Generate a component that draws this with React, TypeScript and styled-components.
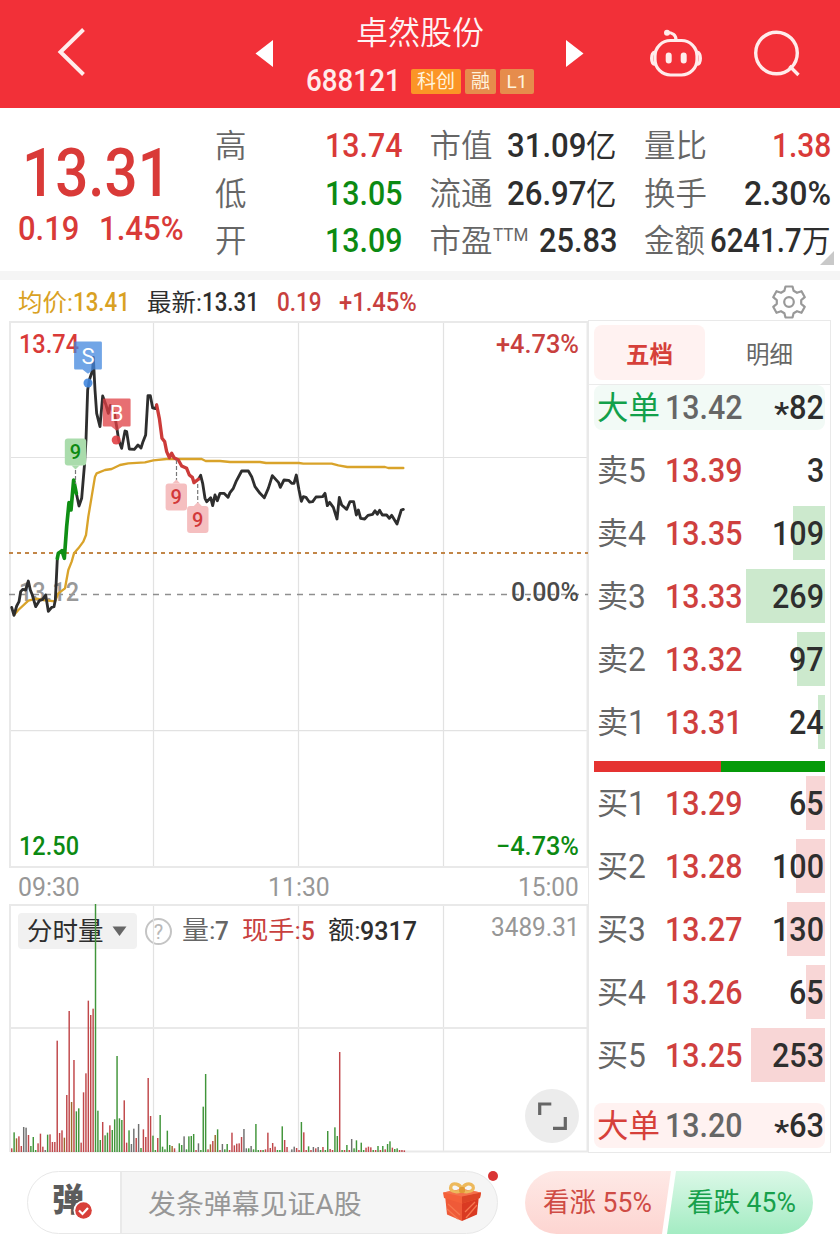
import React, { useLayoutEffect, useRef, useState } from "react";
import styled, { createGlobalStyle } from "styled-components";

const RED = "#d93a38";
const GREEN = "#0c8a12";
const INK = "#2e2e2e";
const GREY = "#666666";
const FONT = `Roboto, "Noto Sans CJK SC", sans-serif`;

const Global = createGlobalStyle`
  * { box-sizing: border-box; }
  body { margin: 0; background: #fff; font-family: ${FONT}; }
  svg { display: block; }
`;

/* ---------- condensed text ---------- */

const FitBox = styled.span<{ $w: number }>`
  display: inline-block;
  flex: none;
  width: ${(p) => p.$w}px;
  white-space: nowrap;
`;
const FitInner = styled.span`
  display: inline-block;
  transform-origin: 0 50%;
`;

/** Condenses its text horizontally until it fills the given width. */
function Fit({ w, children }: { w: number; children: React.ReactNode }) {
  const ref = useRef<HTMLSpanElement>(null);
  const [scale, setScale] = useState(1);
  useLayoutEffect(() => {
    if (ref.current) setScale(w / ref.current.offsetWidth);
  }, [w, children]);
  return (
    <FitBox $w={w}>
      <FitInner ref={ref} style={{ transform: `scaleX(${scale})` }}>
        {children}
      </FitInner>
    </FitBox>
  );
}

/* ---------- page ---------- */

const Page = styled.div`
  width: 840px;
  height: 1250px;
  overflow: hidden;
  background: #fff;
  color: ${INK};
`;

const Header = styled.header`
  display: flex;
  align-items: center;
  height: 108px;
  background: #f23038;
  color: #fff;
`;
const HeaderIcon = styled.svg<{ $ml: number }>`
  flex: none;
  margin-left: ${(p) => p.$ml}px;
`;
const TitleBlock = styled.div`
  display: flex;
  flex-direction: column;
  align-items: center;
  width: 228px;
  height: 108px;
  margin: 0 32px 0 32px;
  padding-top: 10px;
`;
const Title = styled.div`
  font-size: 32px;
  line-height: 46px;
  font-weight: 350;
  opacity: 0.95;
`;
const CodeLine = styled.div`
  display: flex;
  align-items: center;
  gap: 4px;
  height: 50px;
  font-size: 31px;
  font-weight: 500;
  line-height: 50px;
  color: #ffeceb;
`;
const Tag = styled.span<{ $w: number; $bright?: boolean }>`
  width: ${(p) => p.$w}px;
  height: 25px;
  margin-left: ${(p) => (p.$bright ? 6 : 0)}px;
  border-radius: 2px;
  background: ${(p) => (p.$bright ? "#fb9526" : "#e68c4c")};
  font-size: 19px;
  font-weight: 400;
  line-height: 26px;
  text-align: center;
  color: #fff3dc;
`;

const Quote = styled.section`
  display: flex;
  position: relative;
  height: 163px;
  padding-top: 14px;
`;
const Last = styled.div`
  width: 215px;
  padding-left: 18px;
  color: ${RED};
`;
const BigPrice = styled.div`
  height: 84px;
  padding: 9px 0 0 4px;
  font-size: 67px;
  line-height: 84px;
  font-weight: 500;
`;
const Change = styled.div`
  display: flex;
  gap: 20px;
  padding-top: 1px;
  font-size: 33px;
  line-height: 44px;
  font-weight: 500;
`;
const StatColumn = styled.div<{ $w: number; $mr: number }>`
  width: ${(p) => p.$w}px;
  margin-right: ${(p) => p.$mr}px;
`;
const Stat = styled.div`
  display: flex;
  justify-content: space-between;
  height: 47.5px;
  line-height: 49px;
  font-size: 31.5px;
`;
const StatLabel = styled.span`
  display: flex;
  font-weight: 350;
  color: ${GREY};
  white-space: nowrap;
`;
const Sup = styled.sup`
  margin-top: -6px;
  font-size: 18.5px;
  font-weight: 400;
  line-height: 49px;
`;
const StatValue = styled.span<{ $c?: string }>`
  display: flex;
  font-size: 33.5px;
  font-weight: 500;
  line-height: 48px;
  color: ${(p) => p.$c || INK};
`;
const Unit = styled.span`
  font-size: 30.5px;
  font-weight: 400;
  line-height: 49px;
`;
const Corner = styled.i`
  position: absolute;
  right: 6px;
  bottom: 6px;
  border-left: 14px solid transparent;
  border-bottom: 14px solid #c9c9c9;
`;
const Strip = styled.div`
  height: 9px;
  background: #f5f5f5;
`;

const InfoBar = styled.div`
  display: flex;
  align-items: center;
  height: 40px;
  padding: 5px 33px 0 18px;
  font-size: 25px;
  line-height: 42px;
  font-weight: 500;
`;
const InfoItem = styled.span<{ $c: string; $ml?: number }>`
  display: flex;
  margin-left: ${(p) => p.$ml || 0}px;
  color: ${(p) => p.$c};
`;
const Cn = styled.span<{ $s?: number }>`
  font-size: ${(p) => p.$s || 24}px;
  font-weight: 400;
`;
const GearIcon = styled.svg`
  margin: -2px 0 0 auto;
`;

const Main = styled.main`
  display: flex;
  height: 834px;
`;
const Charts = styled.div`
  width: 588px;
`;
const TimeRow = styled.div`
  display: flex;
  justify-content: space-between;
  height: 36px;
  padding: 0 9px 0 18px;
  font-size: 26px;
  line-height: 38px;
  color: #979797;
`;
const VolumeStack = styled.div`
  display: grid;
  height: 249px;
  > * {
    grid-area: 1 / 1;
  }
`;
const VolumeHead = styled.div`
  display: flex;
  align-items: center;
  height: 36px;
  margin: 9px 9px 0 18px;
  font-size: 26px;
  line-height: 38px;
  font-weight: 500;
`;
const Picker = styled.span`
  display: flex;
  align-items: center;
  gap: 8px;
  width: 119px;
  height: 36px;
  padding-left: 9px;
  border-radius: 4px;
  background: #f1f1f1;
  font-size: 25.5px;
  font-weight: 400;
  line-height: 40px;
`;
const Help = styled.span`
  width: 27px;
  height: 27px;
  margin: 0 10px 0 8px;
  border: 2px solid #c4c4c4;
  border-radius: 50%;
  font-size: 20px;
  font-weight: 400;
  line-height: 24px;
  text-align: center;
  color: #b8b8b8;
`;
const MaxVolume = styled.span`
  margin: -8px 0 0 auto;
  font-size: 26px;
  font-weight: 400;
  color: #979797;
`;

/* ---------- order book ---------- */

const Book = styled.aside`
  width: 243px;
  height: 833px;
  padding: 0 5px;
  border: 1px solid #e9e9e9;
`;
const Tabs = styled.div`
  display: flex;
  height: 64px;
  margin: 0 -5px;
  padding: 4px 5px;
  border-bottom: 1px solid #ebebeb;
`;
const Tab = styled.div<{ $on?: boolean }>`
  flex: none;
  width: ${(p) => (p.$on ? 111 : 120)}px;
  height: 55px;
  padding-left: ${(p) => (p.$on ? 0 : 9)}px;
  border-radius: 8px;
  background: ${(p) => (p.$on ? "#fff2f1" : "transparent")};
  color: ${(p) => (p.$on ? "#d6403a" : GREY)};
  font-size: 23.5px;
  font-weight: ${(p) => (p.$on ? 700 : 400)};
  line-height: 60px;
  text-align: center;
`;
const BigOrder = styled.div<{ $sell?: boolean }>`
  display: flex;
  align-items: center;
  height: 45px;
  padding: 0 1px 0 3px;
  border-radius: 8px;
  background: ${(p) => (p.$sell ? "#f2faf6" : "#fff2f1")};
  font-size: 33.5px;
  line-height: 46px;
`;
const BigLabel = styled.span<{ $c: string }>`
  width: 68px;
  padding-top: 2px;
  font-size: 31.5px;
  line-height: 46px;
  color: ${(p) => p.$c};
`;
const Star = styled.span`
  padding-top: 5px;
  margin-bottom: -5px;
  font-size: 32px;
`;
const Rows = styled.div<{ $mt: number }>`
  display: flex;
  flex-direction: column;
  gap: 9px;
  margin-top: ${(p) => p.$mt}px;
`;
const Level = styled.div<{ $bar: number; $c: string }>`
  display: flex;
  align-items: center;
  height: 54px;
  padding: 2px 1px 0 3px;
  background: linear-gradient(${(p) => p.$c}, ${(p) => p.$c}) right / ${(p) => p.$bar}px 100% no-repeat;
  font-size: 33.5px;
  line-height: 56px;
`;
const LevelLabel = styled.span`
  display: flex;
  width: 68px;
  color: ${GREY};
`;
const Price = styled.span<{ $c: string }>`
  color: ${(p) => p.$c};
  font-weight: 500;
`;
const Qty = styled.span`
  display: flex;
  margin-left: auto;
  font-weight: 500;
`;
const Balance = styled.div`
  height: 11px;
  margin: 12px 0 4px;
  background: linear-gradient(90deg, #e53331 127px, #059a09 127px);
`;
const BottomGap = styled.div`
  height: 21px;
`;

/* ---------- footer ---------- */

const Footer = styled.footer`
  display: flex;
  position: relative;
  padding: 17px 27px 0;
`;
const Composer = styled.div`
  display: flex;
  position: relative;
  width: 471px;
  height: 63px;
  border: 1px solid #e8e8e8;
  border-radius: 32px;
  background: linear-gradient(90deg, #fff 92px, #e9e9e9 92px, #e9e9e9 94px, #f5f5f5 94px);
`;
const Danmu = styled.div`
  width: 93px;
  padding-left: 24px;
  font-size: 32px;
  font-weight: 900;
  line-height: 56px;
  color: #5c5c5c;
`;
const CheckBadge = styled.svg`
  position: absolute;
  left: 45px;
  top: 28px;
`;
const Placeholder = styled.div`
  width: 294px;
  padding-left: 27px;
  font-size: 27px;
  font-weight: 400;
  line-height: 66px;
  color: #979797;
`;
const GiftIcon = styled.svg`
  margin: 9px 0 0 27px;
`;
const Dot = styled.i`
  position: absolute;
  right: -1px;
  top: -1px;
  width: 10px;
  height: 10px;
  border-radius: 50%;
  background: #d93434;
`;
const Vote = styled.div<{ $up?: boolean }>`
  width: 146px;
  height: 63px;
  margin-left: ${(p) => (p.$up ? 27 : -4)}px;
  padding-left: ${(p) => (p.$up ? 18 : 20)}px;
  border-radius: ${(p) => (p.$up ? "32px 0 0 32px" : "0 32px 32px 0")};
  clip-path: ${(p) =>
    p.$up
      ? "polygon(0 0, 100% 0, 137px 100%, 0 100%)"
      : "polygon(9px 0, 100% 0, 100% 100%, 0 100%)"};
  background: ${(p) =>
    p.$up
      ? "linear-gradient(#fee9e6, #fdd5d1)"
      : "linear-gradient(#dbf8e7, #a4ecc3)"};
  font-size: 27px;
  line-height: 65px;
  color: ${(p) => (p.$up ? "#cf4b45" : "#17a04b")};
`;

/* ---------- chart data ---------- */

const LINE_START =
  "35,982 42,1006 50,978 57,965 62,935 68,928 77,930 85,903 91,930 97,945 107,980 118,962 128,958 137,945 145,994 155,982 162,980 166,960 168,920 172,835";
const RISE = "172,835 175,820 184,814 186,812 193,835 200,740 207,668 213,690 221,600 229,640";
const LINE_PEAK =
  "229,640 237,678 245,655 253,560 258,480 263,330 268,300 278,270 280,232 285,330 290,400 300,440 308,348 318,375 325,400 331,376 343,400 350,440 356,480 365,505 375,453 380,455 388,507 403,508 414,495 423,504 429,485 437,465 444,347 451,347 458,384 466,386 470,375";
const FALL =
  "470,375 478,415 486,475 494,485 500,515 508,533 515,520 522,533 535,540 545,558 560,565 568,585 577,592 582,608 596,597";
const LINE_END =
  "596,597 602,586 608,610 615,655 620,665 632,653 638,677 645,645 652,662 660,640 672,640 684,652 690,638 700,625 708,605 725,573 745,573 755,590 765,620 780,640 793,653 805,625 817,587 836,608 841,622 852,600 866,601 875,610 882,610 889,585 897,630 904,664 910,650 918,652 928,666 938,665 948,651 968,650 975,640 982,677 989,667 1000,682 1011,717 1018,652 1025,675 1040,688 1050,665 1061,665 1069,705 1075,690 1082,715 1094,717 1104,706 1118,703 1125,692 1132,703 1139,691 1147,705 1160,705 1168,715 1175,706 1191,732 1204,690 1210,688";
const AVERAGE =
  "42,1005 55,990 85,962 110,956 130,960 165,964 175,940 195,925 205,870 215,845 222,820 235,805 250,785 258,765 265,710 275,650 285,590 290,580 315,570 335,567 360,555 385,550 435,547 460,541 500,537 605,537 617,543 660,543 690,546 780,546 798,549 897,549 910,551 995,551 1015,556 1042,561 1155,561 1165,564 1210,564";

/* colour letter followed by bar height, one entry per minute */
const VOLUME =
  "r11 g59 o41 r47 r18 k75 k73 r51 g18 g45 g6 r26 r55 r16 k6 g52 r53 r30 r30 r334 r57 r65 o43 r171 r423 o150 r276 g122 g131 r28 r179 r236 r454 r411 r430 g744 g124 g36 r90 g50 g58 r80 g66 g98 g288 g101 g96 r155 r28 g65 k24 k70 r42 k84 g12 r68 r45 r222 r108 g49 g6 r42 g111 g16 g8 g64 g21 o18 r11 k0 g26 g21 k47 g8 g47 g48 g54 r6 k26 g6 g136 g234 r8 o23 r33 o51 g68 r6 k24 g8 g24 r6 r58 r20 r25 r26 r45 k69 k11 g11 k18 g8 g84 g6 r6 g6 r8 r58 r12 r27 r16 g6 g6 g77 r36 r15 k0 k8 k16 r12 r6 g90 r59 r6 g17 r6 k15 r11 k15 g6 r15 g6 g63 r9 r6 g74 g48 r300 g6 r6 g21 r6 k39 g11 g35 r6 g28 g6 r13 r16 r14 g6 r6 g18 r6 g18 r8 g24 g32 r13 g9 g11 r6 r6 r5".split(" ");
const BAR_COLOURS: Record<string, string> = {
  r: "#c0474a",
  g: "#41953a",
  o: "#9a6a2c",
  k: "#707070",
};

const AxisText = ({ x, y, w, c, children }: { x: number; y: number; w: number; c: string; children: string }) => (
  <text x={x} y={y} fill={c} fontSize="26" fontWeight="500" textLength={w} lengthAdjust="spacingAndGlyphs" fontFamily={FONT}>
    {children}
  </text>
);

const Flag = ({ x, y, fill, c, label, up }: { x: number; y: number; fill: string; c: string; label: string; up?: boolean }) => (
  <g>
    <rect x={x - 10.7} y={y - 13.5} width="21.4" height="27" rx="3" fill={fill} />
    <path d={up ? `M${x - 4} ${y - 13.5}l4-4l4 4z` : `M${x - 4} ${y + 13.5}l4 4l4-4z`} fill={fill} />
    <text x={x} y={y + 7} fill={c} fontSize="20" fontWeight="500" textAnchor="middle" fontFamily={FONT}>
      {label}
    </text>
  </g>
);

const TradeMark = ({ x, y, dotX, fill, label }: { x: number; y: number; dotX: number; fill: string; label: string }) => (
  <g>
    <g opacity="0.75">
      <path
        d={`M${x - 12.7} ${y - 12.7}h25.4v25.4h-7.7l-5 4l-5-4h-7.7z`}
        fill={fill}
        stroke={fill}
        strokeWidth="2.4"
        strokeLinejoin="round"
      />
    </g>
    <circle cx={dotX} cy={y + 27.5} r="4.5" fill={fill} opacity="0.9" />
    <text x={x} y={y + 8} fill="#fff" fontSize="22" textAnchor="middle" fontFamily={FONT}>
      {label}
    </text>
  </g>
);

function PriceChart() {
  return (
    <svg width="589" height="548" viewBox="0 320 589 548">
      <g stroke="#e2e2e2" strokeWidth="1.2">
        <path d="M153.5 322V867M298.5 322V867M443.5 322V867M10 457.5H588M10 730.7H588" />
      </g>
      <path d="M10 322H588M10 867H588" stroke="#e9e9e9" strokeWidth="2" />
      <path d="M10 321V868M587.5 321V868" stroke="#e9e9e9" strokeWidth="2" fill="none" />
      <path d="M9 594.5H588" stroke="#8f8f8f" strokeWidth="1.7" strokeDasharray="6 6" />
      <path d="M9 553H588" stroke="#c28648" strokeWidth="2" strokeDasharray="4 4" />
      <AxisText x={19} y={601} w={60} c="#999999">13.12</AxisText>
      <g transform="translate(0 280) scale(0.33333)" fill="none" strokeWidth="8.5" strokeLinejoin="round" strokeLinecap="round">
        <polyline points={AVERAGE} stroke="#d9a32a" strokeWidth="7" />
        <polyline points={LINE_START} stroke={INK} />
        <polyline points={LINE_PEAK} stroke={INK} />
        <polyline points={LINE_END} stroke={INK} />
        <polyline points={RISE} stroke="#0f8f14" strokeWidth="11" />
        <polyline points={FALL} stroke="#cc3b39" strokeWidth="10" />
      </g>
      <path d="M75.5 470V484M176.5 460V481M197.7 484V503" stroke="#777" strokeWidth="1.2" strokeDasharray="4 2" />
      <AxisText x={19} y={353} w={60} c={RED}>13.74</AxisText>
      <AxisText x={496} y={353} w={83} c="#c8403e">+4.73%</AxisText>
      <AxisText x={511} y={601} w={68} c="#4a4a4a">0.00%</AxisText>
      <AxisText x={19} y={855} w={60} c={GREEN}>12.50</AxisText>
      <AxisText x={496} y={855} w={83} c={GREEN}>−4.73%</AxisText>
      <Flag x={75.5} y={452} fill="#aadcac" c="#0c8a12" label="9" />
      <Flag x={176.3} y={497} fill="#f5bfc0" c="#d23a3a" label="9" up />
      <Flag x={197.8} y={519.5} fill="#f5bfc0" c="#d23a3a" label="9" up />
      <TradeMark x={88} y={355.5} dotX={88} fill="#4287de" label="S" />
      <TradeMark x={116.7} y={412.5} dotX={116.2} fill="#e03f44" label="B" />
    </svg>
  );
}

function VolumeChart() {
  return (
    <svg width="589" height="249" viewBox="0 904 589 249">
      <g stroke="#e2e2e2" strokeWidth="1.2">
        <path d="M153.5 905V1152M298.5 905V1152M443.5 905V1152" />
      </g>
      <path d="M10 905H588M10 1028H588M10 1151.5H588M10 904V1152M587.5 904V1152" stroke="#e9e9e9" strokeWidth="2" />
      {VOLUME.map((v, i) => {
        const h = Number(v.slice(1)) / 3;
        return (
          <rect key={i} x={11 + i * 2.394} y={1152 - h} width="1.45" height={h} fill={BAR_COLOURS[v[0]]} />
        );
      })}
      <circle cx="552" cy="1116" r="27" fill="#ececec" />
      <path d="M539.7 1115V1104H551.3M553 1128.3H565.3V1117" fill="none" stroke="#666" strokeWidth="3.2" />
    </svg>
  );
}

function Gear() {
  return (
    <GearIcon width="36" height="36" viewBox="-18 -18 36 36" fill="none" stroke="#999" strokeWidth="2.2" strokeLinejoin="round">
      <path d="M-3.5 -15.5H3.5L4.6 -11.2L8 -9.2L12.5 -10.8L15.8 -4.8L12.2 -1.8V1.8L15.8 4.8L12.5 10.8L8 9.2L4.6 11.2L3.5 15.5H-3.5L-4.6 11.2L-8 9.2L-12.5 10.8L-15.8 4.8L-12.2 1.8V-1.8L-15.8 -4.8L-12.5 -10.8L-8 -9.2L-4.6 -11.2Z" />
      <circle r="4.8" />
    </GearIcon>
  );
}

function Gift() {
  return (
    <GiftIcon width="40" height="42" viewBox="0 0 40 42">
      <path d="M3 14L20 20V40L5 33.500Z" fill="#ef5a38" />
      <path d="M37 14L20 20V40L35 33.500Z" fill="#d93a22" />
      <path d="M1 11.500L20 8L39 11.500L38 17L20 22.500L2 17Z" fill="#f4603a" />
      <path d="M20 15L39 11.500L38 17L20 22.500Z" fill="#dc4426" />
      <path d="M1 11.500L20 8L39 11.500L20 15.500Z" fill="#f4704a" />
      <path d="M6 23L18 34M5 28L16 38M24 37L35 24M23 31L33 21" stroke="#f6764e" strokeWidth="1.300" />
      <path d="M19 10C13 12 7 10 9 5C11 1 18 3 20 8C22 3 28 1 31 5C33 10 26 12 20 10" fill="none" stroke="#edb95c" strokeWidth="3.200" />
      <rect x="17" y="6" width="6" height="6" rx="2" fill="#e19a35" />
    </GiftIcon>
  );
}

/* ---------- order book data ---------- */

const SELL: [string, string, string, number][] = [
  ["5", "13.39", "3", 0],
  ["4", "13.35", "109", 32],
  ["3", "13.33", "269", 79],
  ["2", "13.32", "97", 28],
  ["1", "13.31", "24", 7],
];
const BUY: [string, string, string, number][] = [
  ["1", "13.29", "65", 19],
  ["2", "13.28", "100", 29],
  ["3", "13.27", "130", 38],
  ["4", "13.26", "65", 19],
  ["5", "13.25", "253", 74],
];

function Levels({ side, rows, colour, mt }: { side: string; rows: typeof SELL; colour: string; mt: number }) {
  return (
    <Rows $mt={mt}>
      {rows.map(([n, price, qty, bar]) => (
        <Level key={n} $bar={bar} $c={colour}>
          <LevelLabel>
            <Cn $s={31}>{side}</Cn>
            <Fit w={18}>{n}</Fit>
          </LevelLabel>
          <Price $c="#cf403e">
            <Fit w={77}>{price}</Fit>
          </Price>
          <Qty>
            <Fit w={qty.length * 17.3}>{qty}</Fit>
          </Qty>
        </Level>
      ))}
    </Rows>
  );
}

export default function App() {
  return (
    <Page>
      <Global />
      <Header>
        <HeaderIcon $ml={56} width="30" height="56" viewBox="56 26 30 56" fill="none" stroke="#ffeceb" strokeWidth="4">
          <path d="M83.500 29.500L60.500 52L83.500 74.500" />
        </HeaderIcon>
        <HeaderIcon $ml={169} width="19" height="28" viewBox="255 40 19 28" fill="#fff">
          <path d="M255.500 53.500L273 40V67Z" />
        </HeaderIcon>
        <TitleBlock>
          <Title>卓然股份</Title>
          <CodeLine>
            <Fit w={95}>688121</Fit>
            <Tag $w={50} $bright>科创</Tag>
            <Tag $w={31}>融</Tag>
            <Tag $w={34}>L1</Tag>
          </CodeLine>
        </TitleBlock>
        <HeaderIcon $ml={0} width="19" height="28" viewBox="566 40 19 28" fill="#fff">
          <path d="M566 40V67L583.500 53.500Z" />
        </HeaderIcon>
        <HeaderIcon $ml={62} width="58" height="52" viewBox="647 28 58 52" fill="none" stroke="#ffeceb" strokeWidth="3.200">
          <rect x="655" y="40.500" width="42" height="34.500" rx="15.500" />
          <path d="M655 52C650.500 53 650.500 63.500 655 64.500M697 52C701.500 53 701.500 63.500 697 64.500" />
          <path d="M676 40C676 35 672 32.500 667 32.500" />
          <circle cx="667" cy="32.700" r="3" fill="#ffeceb" stroke="none" />
          <path d="M668.700 55.500V60.500M683.700 55.500V60.500" strokeWidth="6" strokeLinecap="round" />
        </HeaderIcon>
        <HeaderIcon $ml={47} width="50" height="50" viewBox="752 29 50 50" fill="none" stroke="#ffeceb" strokeWidth="3.400">
          <circle cx="776.500" cy="53" r="20.800" />
          <path d="M789.500 66L798.500 75" />
        </HeaderIcon>
      </Header>

      <Quote>
        <Last>
          <BigPrice>
            <Fit w={149}>13.31</Fit>
          </BigPrice>
          <Change>
            <Fit w={61}>0.19</Fit>
            <Fit w={85}>1.45%</Fit>
          </Change>
        </Last>
        <StatColumn $w={187} $mr={27.5}>
          <Stat><StatLabel>高</StatLabel><StatValue $c={RED}><Fit w={77}>13.74</Fit></StatValue></Stat>
          <Stat><StatLabel>低</StatLabel><StatValue $c={GREEN}><Fit w={77}>13.05</Fit></StatValue></Stat>
          <Stat><StatLabel>开</StatLabel><StatValue $c={GREEN}><Fit w={77}>13.09</Fit></StatValue></Stat>
        </StatColumn>
        <StatColumn $w={187} $mr={27.5}>
          <Stat><StatLabel>市值</StatLabel><StatValue><Fit w={79}>31.09</Fit><Unit>亿</Unit></StatValue></Stat>
          <Stat><StatLabel>流通</StatLabel><StatValue><Fit w={79}>26.97</Fit><Unit>亿</Unit></StatValue></Stat>
          <Stat><StatLabel>市盈<Sup><Fit w={35}>TTM</Fit></Sup></StatLabel><StatValue><Fit w={78}>25.83</Fit></StatValue></Stat>
        </StatColumn>
        <StatColumn $w={187} $mr={0}>
          <Stat><StatLabel>量比</StatLabel><StatValue $c={RED}><Fit w={59}>1.38</Fit></StatValue></Stat>
          <Stat><StatLabel>换手</StatLabel><StatValue><Fit w={87}>2.30%</Fit></StatValue></Stat>
          <Stat><StatLabel><Fit w={61}>金额</Fit></StatLabel><StatValue><Fit w={92}>6241.7</Fit><Unit><Fit w={29}>万</Fit></Unit></StatValue></Stat>
        </StatColumn>
        <Corner />
      </Quote>
      <Strip />

      <InfoBar>
        <InfoItem $c="#d9a123"><Cn><Fit w={55}>均价:</Fit></Cn><Fit w={57}>13.41</Fit></InfoItem>
        <InfoItem $c={INK} $ml={17}><Cn><Fit w={55}>最新:</Fit></Cn><Fit w={57}>13.31</Fit></InfoItem>
        <InfoItem $c="#c8403e" $ml={18}><Fit w={45}>0.19</Fit></InfoItem>
        <InfoItem $c="#c8403e" $ml={17}><Fit w={78}>+1.45%</Fit></InfoItem>
        <Gear />
      </InfoBar>

      <Main>
        <Charts>
          <PriceChart />
          <TimeRow>
            <Fit w={62}>09:30</Fit>
            <Fit w={62}>11:30</Fit>
            <Fit w={61}>15:00</Fit>
          </TimeRow>
          <VolumeStack>
            <VolumeHead>
              <Picker>
                分时量
                <svg width="15" height="11" viewBox="0 0 15 11"><path d="M0.500 0.500H14.500L7.500 10Z" fill="#666" /></svg>
              </Picker>
              <Help>?</Help>
              <InfoItem $c={GREY}><Cn $s={24.5}><Fit w={33}>量:</Fit></Cn><Fit w={14}>7</Fit></InfoItem>
              <InfoItem $c="#c8403e" $ml={13}><Cn $s={24.5}><Fit w={59}>现手:</Fit></Cn><Fit w={14}>5</Fit></InfoItem>
              <InfoItem $c={INK} $ml={13}><Cn $s={24.5}><Fit w={32}>额:</Fit></Cn><Fit w={57}>9317</Fit></InfoItem>
              <MaxVolume><Fit w={89}>3489.31</Fit></MaxVolume>
            </VolumeHead>
            <VolumeChart />
          </VolumeStack>
        </Charts>

        <Book>
          <Tabs>
            <Tab $on>五档</Tab>
            <Tab>明细</Tab>
          </Tabs>
          <BigOrder $sell>
            <BigLabel $c="#12a04b">大单</BigLabel>
            <Price $c={GREY}><Fit w={77}>13.42</Fit></Price>
            <Qty><Star><Fit w={15}>*</Fit></Star><Fit w={35}>82</Fit></Qty>
          </BigOrder>
          <Levels side="卖" rows={SELL} colour="#cce9cd" mt={13} />
          <Balance />
          <Levels side="买" rows={BUY} colour="#f8d6d6" mt={0} />
          <BottomGap />
          <BigOrder>
            <BigLabel $c="#d6403a">大单</BigLabel>
            <Price $c={GREY}><Fit w={77}>13.20</Fit></Price>
            <Qty><Star><Fit w={15}>*</Fit></Star><Fit w={35}>63</Fit></Qty>
          </BigOrder>
        </Book>
      </Main>

      <Footer>
        <Composer>
          <Danmu>弹</Danmu>
          <CheckBadge width="21" height="21" viewBox="0 0 21 21">
            <circle cx="10.500" cy="10.500" r="10" fill="#fff" />
            <circle cx="10.500" cy="10.500" r="8.300" fill="#d8403a" />
            <path d="M6 10.500L9.500 14L15 8" fill="none" stroke="#fff" strokeWidth="2.200" />
          </CheckBadge>
          <Placeholder><Fit w={214}>发条弹幕见证A股</Fit></Placeholder>
          <Gift />
          <Dot />
        </Composer>
        <Vote $up><Fit w={109}>看涨 55%</Fit></Vote>
        <Vote><Fit w={109}>看跌 45%</Fit></Vote>
      </Footer>
    </Page>
  );
}
